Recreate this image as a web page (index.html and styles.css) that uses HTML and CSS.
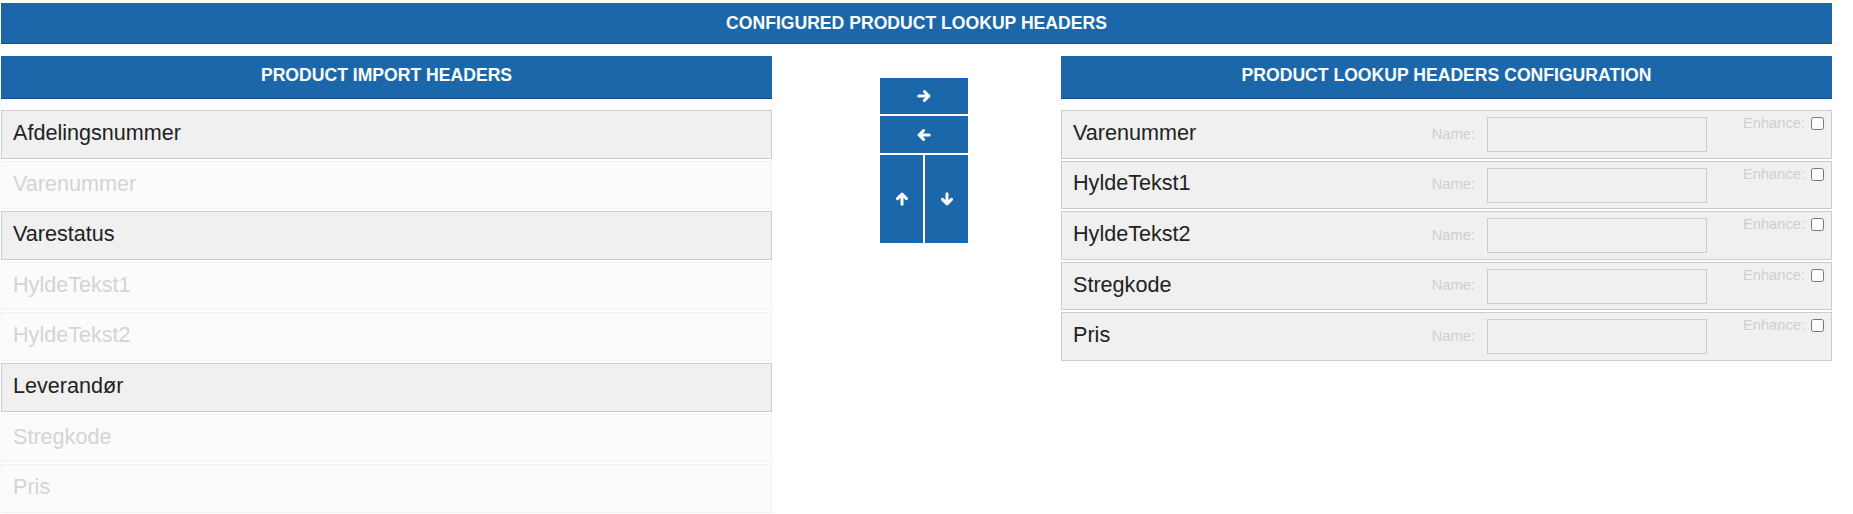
FILE: index.html
```html
<!DOCTYPE html>
<html lang="da">
<head>
<meta charset="utf-8">
<title>Configured Product Lookup Headers</title>
<link rel="stylesheet" href="styles.css">
</head>
<body>
<div class="page">
  <div class="title-bar">CONFIGURED PRODUCT LOOKUP HEADERS</div>
  <div class="columns">
    <section class="panel">
      <div class="panel-header">PRODUCT IMPORT HEADERS</div>
      <ul class="list">
        <li class="item">Afdelingsnummer</li>
        <li class="item used">Varenummer</li>
        <li class="item">Varestatus</li>
        <li class="item used">HyldeTekst1</li>
        <li class="item used">HyldeTekst2</li>
        <li class="item">Leverandør</li>
        <li class="item used">Stregkode</li>
        <li class="item used">Pris</li>
      </ul>
    </section>

    <div class="controls">
      <div class="btn-grid">
        <button class="btn wide" type="button" aria-label="Add">
          <svg viewBox="0 0 14 14" width="14" height="14"><path d="M1.8 7H11.8M7.4 2.5L11.9 7L7.4 11.5" fill="none" stroke="#fff" stroke-width="3" stroke-linecap="round" stroke-linejoin="round"/></svg>
        </button>
        <button class="btn wide" type="button" aria-label="Remove">
          <svg viewBox="0 0 14 14" width="14" height="14"><path d="M12.2 7H2.2M6.6 2.5L2.1 7L6.6 11.5" fill="none" stroke="#fff" stroke-width="3" stroke-linecap="round" stroke-linejoin="round"/></svg>
        </button>
        <button class="btn tall" type="button" aria-label="Move up">
          <svg viewBox="0 0 14 14" width="14" height="14"><path d="M7 12.2V2.2M2.5 6.6L7 2.1L11.5 6.6" fill="none" stroke="#fff" stroke-width="3" stroke-linecap="round" stroke-linejoin="round"/></svg>
        </button>
        <button class="btn tall" type="button" aria-label="Move down">
          <svg viewBox="0 0 14 14" width="14" height="14"><path d="M7 1.8V11.8M2.5 7.4L7 11.9L11.5 7.4" fill="none" stroke="#fff" stroke-width="3" stroke-linecap="round" stroke-linejoin="round"/></svg>
        </button>
      </div>
    </div>

    <section class="panel">
      <div class="panel-header">PRODUCT LOOKUP HEADERS CONFIGURATION</div>
      <ul class="list">
        <li class="config">
          <span class="config-name">Varenummer</span>
          <label class="name-label">Name:</label>
          <input class="name-input" type="text">
          <label class="enhance">Enhance: <input type="checkbox"></label>
        </li>
        <li class="config">
          <span class="config-name">HyldeTekst1</span>
          <label class="name-label">Name:</label>
          <input class="name-input" type="text">
          <label class="enhance">Enhance: <input type="checkbox"></label>
        </li>
        <li class="config">
          <span class="config-name">HyldeTekst2</span>
          <label class="name-label">Name:</label>
          <input class="name-input" type="text">
          <label class="enhance">Enhance: <input type="checkbox"></label>
        </li>
        <li class="config">
          <span class="config-name">Stregkode</span>
          <label class="name-label">Name:</label>
          <input class="name-input" type="text">
          <label class="enhance">Enhance: <input type="checkbox"></label>
        </li>
        <li class="config">
          <span class="config-name">Pris</span>
          <label class="name-label">Name:</label>
          <input class="name-input" type="text">
          <label class="enhance">Enhance: <input type="checkbox"></label>
        </li>
      </ul>
    </section>
  </div>
</div>
</body>
</html>
```
FILE: styles.css
```css
* { box-sizing: border-box; }

body {
  margin: 0;
  background: #fff;
  font-family: "Liberation Sans", Arial, sans-serif;
  color: #222;
}

.page {
  width: 1831px;
  margin-left: 1px;
  padding-top: 3px;
}

.title-bar,
.panel-header {
  background: #1b67aa;
  border-bottom: 1px solid #0f4f8d;
  color: #fff;
  font-weight: bold;
  font-size: 17.6px;
  display: flex;
  align-items: center;
  justify-content: center;
}

.title-bar {
  height: 41px;
}

.columns {
  display: grid;
  grid-template-columns: 771px 1fr 771px;
  margin-top: 12px;
}

.panel-header {
  height: 43px;
  padding-bottom: 4px;
}

.list {
  list-style: none;
  margin: 11px 0 0;
  padding: 0;
}

.item {
  height: 48.6px;
  margin-bottom: 2px;
  border: 1px solid #cccccc;
  background: #f0f0f0;
  padding: 9px 11px 0;
  font-size: 21.6px;
  color: #222;
}

.item.used {
  border-color: #f1f1f1;
  background: #fbfbfb;
  color: #d4d4d4;
}

.controls {
  padding: 22px 0 0 108px;
}

.btn-grid {
  width: 88px;
  display: grid;
  grid-template-columns: 1fr 1fr;
  grid-template-rows: 36px 37px 88px;
  gap: 2px;
}

.btn {
  border: 0;
  padding: 0;
  margin: 0;
  background: #1b67aa;
  display: flex;
  align-items: center;
  justify-content: center;
}

.btn.wide {
  grid-column: span 2;
}

.btn svg {
  display: block;
}

.config {
  height: 48.6px;
  margin-bottom: 2px;
  border: 1px solid #cccccc;
  background: #f0f0f0;
  padding: 4px 7px 0 11px;
  display: flex;
  align-items: flex-start;
}

.config-name {
  flex: 1;
  font-size: 21.6px;
  margin-top: 4.8px;
  color: #222;
}

.name-label {
  font-size: 14.7px;
  color: #cfcfcf;
  margin-top: 10.7px;
}

.name-input {
  width: 220px;
  height: 35px;
  margin: 2px 0 0 12px;
  border: 1px solid #cccccc;
  background: #f0f0f0;
  padding: 0 6px;
  font: inherit;
}

.enhance {
  margin-left: 36px;
  font-size: 14.7px;
  color: #cfcfcf;
  display: flex;
  align-items: flex-start;
}

.enhance input {
  width: 13px;
  height: 13px;
  margin: 2px 0 0 6px;
}
```
